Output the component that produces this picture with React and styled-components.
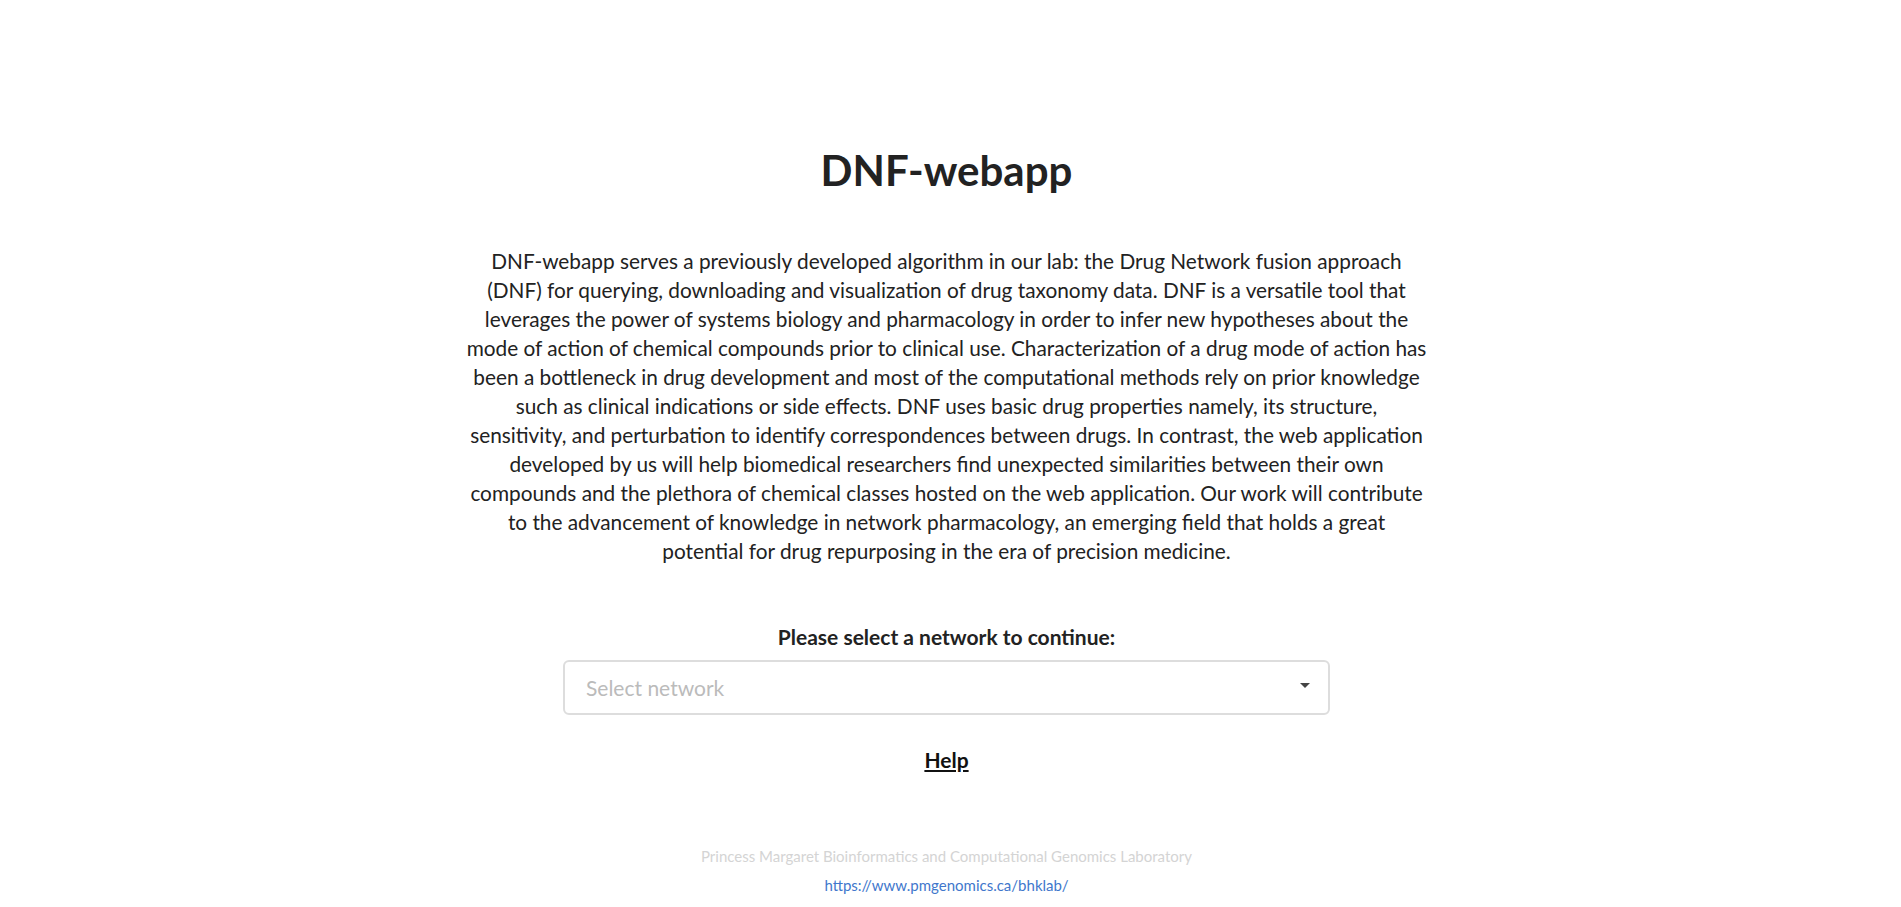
import React from 'react';
import styled, {createGlobalStyle} from 'styled-components';

const GlobalStyle = createGlobalStyle`
    body {
        margin: 0;
        background: #fff;
        font-family: Lato, "Open Sans", sans-serif;
        color: #222;
    }
`

const introLines = [
    'DNF-webapp serves a previously developed algorithm in our lab: the Drug Network fusion approach',
    '(DNF) for querying, downloading and visualization of drug taxonomy data. DNF is a versatile tool that',
    'leverages the power of systems biology and pharmacology in order to infer new hypotheses about the',
    'mode of action of chemical compounds prior to clinical use. Characterization of a drug mode of action has',
    'been a bottleneck in drug development and most of the computational methods rely on prior knowledge',
    'such as clinical indications or side effects. DNF uses basic drug properties namely, its structure,',
    'sensitivity, and perturbation to identify correspondences between drugs. In contrast, the web application',
    'developed by us will help biomedical researchers find unexpected similarities between their own',
    'compounds and the plethora of chemical classes hosted on the web application. Our work will contribute',
    'to the advancement of knowledge in network pharmacology, an emerging field that holds a great',
    'potential for drug repurposing in the era of precision medicine.',
]

function App() {
    return (
        <Page>
            <GlobalStyle/>
            <Title>DNF-webapp</Title>
            <Intro>
                {introLines.map((line, index) =>
                    <Line key={index}>{line}</Line>
                )}
            </Intro>
            <Label>Please select a network to continue:</Label>
            <Select>
                <Placeholder>Select network</Placeholder>
                <Caret/>
            </Select>
            <HelpLink href="#">Help</HelpLink>
            <Footer>
                <Lab>Princess Margaret Bioinformatics and Computational Genomics Laboratory</Lab>
                <FooterLink href="#">https://www.pmgenomics.ca/bhklab/</FooterLink>
            </Footer>
        </Page>
    )
}

export default App

const Page = styled.div`
    display: flex;
    flex-direction: column;
    align-items: center;
    padding-top: 145px;
    padding-right: 8px;
`

const Title = styled.h1`
    margin: 0;
    font-size: 42px;
    line-height: 50px;
    font-weight: 700;
    color: #222;
`

const Intro = styled.p`
    margin: 51px 0 0;
    width: 1000px;
    text-align: center;
    font-size: 20.8px;
    line-height: 29px;
    color: #222;
`

const Line = styled.span`
    display: block;
    white-space: nowrap;
`

const Label = styled.div`
    margin-top: 60px;
    font-size: 21px;
    line-height: 24px;
    font-weight: 700;
`

const Select = styled.div`
    margin-top: 11px;
    box-sizing: border-box;
    width: 767px;
    height: 55px;
    border: 2px solid #ddd;
    border-radius: 6px;
    display: flex;
    align-items: center;
    justify-content: space-between;
    padding: 0 18px 0 21px;
`

const Placeholder = styled.span`
    font-size: 21px;
    color: #bbb;
`

const Caret = styled.span`
    width: 0;
    height: 0;
    border-left: 5px solid transparent;
    border-right: 5px solid transparent;
    border-top: 5px solid #444;
    margin-top: -4px;
`

const HelpLink = styled.a`
    margin-top: 33px;
    font-size: 21px;
    line-height: 24px;
    font-weight: 700;
    color: #111;
    text-decoration: underline;
`

const Footer = styled.footer`
    margin-top: 74px;
    display: flex;
    flex-direction: column;
    align-items: center;
    gap: 9px;
    font-size: 15px;
    line-height: 20px;
`

const Lab = styled.div`
    color: #d4d4d4;
`

const FooterLink = styled.a`
    color: #4177cc;
    text-decoration: none;
`
